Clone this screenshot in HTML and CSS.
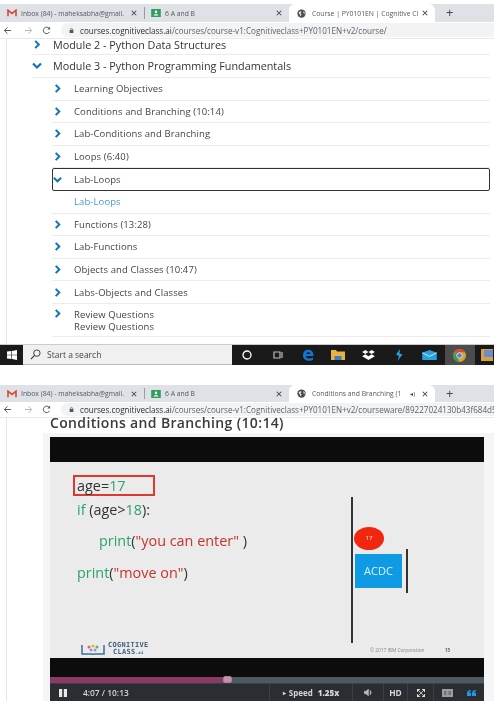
FILE: index.html
```html
<!DOCTYPE html>
<html lang="en">
<head>
<meta charset="utf-8">
<title>Course</title>
<link rel="stylesheet" href="styles.css">
</head>
<body>
<svg class="defs" width="0" height="0" aria-hidden="true">
  <symbol id="gmail" viewBox="0 0 12 10"><path d="M1 9V1.500L6 5.500 11 1.500V9" fill="none" stroke="#d9463c" stroke-width="2"/></symbol>
  <symbol id="classroom" viewBox="0 0 12 10"><rect width="12" height="10" fill="#2f9e5b"/><circle cx="6" cy="3.600" r="1.600" fill="#fff"/><path d="M3 8c0-2 6-2 6 0z" fill="#fff"/></symbol>
  <symbol id="globe" viewBox="0 0 12 12"><circle cx="6" cy="6" r="5.500" fill="#4a4d52"/><path d="M2 4.500 5 2.500 6 4 4.500 5.500 6 7 5 10 3.500 7zM8 3l2 1 .5 3L9 6z" fill="#e8e8e8"/></symbol>
  <symbol id="x" viewBox="0 0 8 8"><path d="M1 1l6 6M7 1 1 7" stroke="#44474a" stroke-width="1.400" fill="none"/></symbol>
  <symbol id="right" viewBox="0 0 8 10"><path d="M2 1l4 4-4 4" fill="none" stroke="#0f75b4" stroke-width="2.200"/></symbol>
  <symbol id="down" viewBox="0 0 10 8"><path d="M1 2l4 4 4-4" fill="none" stroke="#0f75b4" stroke-width="2.200"/></symbol>
  <symbol id="back" viewBox="0 0 10 10"><path d="M9 5H1.500M5 1.500 1.500 5 5 8.500" fill="none" stroke="currentColor" stroke-width="1.100"/></symbol>
  <symbol id="fwd" viewBox="0 0 10 10"><path d="M1 5h7.500M5 1.500 8.500 5 5 8.500" fill="none" stroke="currentColor" stroke-width="1.100"/></symbol>
  <symbol id="reload" viewBox="0 0 10 10"><path d="M8.300 6.500A3.600 3.600 0 1 1 7.800 2.500" fill="none" stroke="#55585c" stroke-width="1.100"/><path d="M9 .8V4H5.800z" fill="#55585c"/></symbol>
  <symbol id="lock" viewBox="0 0 8 10"><rect x="1" y="4" width="6" height="5" fill="#55585c"/><path d="M2.500 4V3a1.500 1.500 0 0 1 3 0v1" fill="none" stroke="#55585c"/></symbol>
</svg>

<section class="window window-top">
  <div class="tabstrip">
    <div class="tab tab-first"><svg class="fav"><use href="#gmail"/></svg><span class="tab-title">Inbox (84) - maheksabha@gmail.</span><svg class="close"><use href="#x"/></svg></div>
    <div class="tab-sep"></div>
    <div class="tab tab-second"><svg class="fav"><use href="#classroom"/></svg><span class="tab-title">6 A and B</span><svg class="close"><use href="#x"/></svg></div>
    <div class="tab tab-active"><svg class="fav globe"><use href="#globe"/></svg><span class="tab-title">Course | PY0101EN | Cognitive Cl</span><svg class="close"><use href="#x"/></svg></div>
    <div class="newtab">+</div>
  </div>
  <div class="toolbar">
    <svg class="nav"><use href="#back"/></svg><svg class="nav nav-off"><use href="#fwd"/></svg><svg class="nav"><use href="#reload"/></svg>
    <div class="omnibox"><svg class="lock"><use href="#lock"/></svg><span class="host">courses.cognitiveclass.ai</span><span class="path">/courses/course-v1:Cognitiveclass+PY0101EN+v2/course/</span></div>
  </div>
  <main class="outline">
    <div class="module module-clip"><svg class="chev"><use href="#right"/></svg><span>Module 2 - Python Data Structures</span></div>
    <div class="module module-open"><svg class="chev"><use href="#down"/></svg><span>Module 3 - Python Programming Fundamentals</span></div>
    <ul class="items">
      <li class="item"><svg class="chev-s"><use href="#right"/></svg>Learning Objectives</li>
      <li class="item"><svg class="chev-s"><use href="#right"/></svg>Conditions and Branching (10:14)</li>
      <li class="item"><svg class="chev-s"><use href="#right"/></svg>Lab-Conditions and Branching</li>
      <li class="item"><svg class="chev-s"><use href="#right"/></svg>Loops (6:40)</li>
      <li class="item item-focus"><svg class="chev-s"><use href="#down"/></svg>Lab-Loops</li>
      <li class="item item-link">Lab-Loops</li>
      <li class="item"><svg class="chev-s"><use href="#right"/></svg>Functions (13:28)</li>
      <li class="item"><svg class="chev-s"><use href="#right"/></svg>Lab-Functions</li>
      <li class="item"><svg class="chev-s"><use href="#right"/></svg>Objects and Classes (10:47)</li>
      <li class="item"><svg class="chev-s"><use href="#right"/></svg>Labs-Objects and Classes</li>
      <li class="item item-double"><svg class="chev-s"><use href="#right"/></svg><span class="stack"><span>Review Questions</span><span>Review Questions</span></span></li>
    </ul>
  </main>
  <footer class="taskbar">
    <div class="start"><svg viewBox="0 0 10 10" width="10" height="10"><path d="M0 1.500 4.400 1V4.700H0zM5 .9 10 0V4.700H5zM0 5.300H4.400V9L0 8.500zM5 5.300H10V10L5 9.100z" fill="#fff"/></svg></div>
    <div class="search"><svg viewBox="0 0 12 12" width="11" height="11"><circle cx="7.500" cy="4.500" r="3.500" fill="none" stroke="#333" stroke-width="1"/><path d="M5 7 1 11" stroke="#333" stroke-width="1.200"/></svg><span>Start a search</span></div>
    <div class="tray">
      <div class="tray-slot"><svg viewBox="0 0 10 10" width="10" height="10"><circle cx="5" cy="5" r="4" fill="none" stroke="#fff" stroke-width="1.300"/></svg></div>
      <div class="tray-slot"><svg viewBox="0 0 12 10" width="12" height="10"><path d="M2 2h6v6H2zM10 2v6" fill="none" stroke="#bbb" stroke-width="1.200"/></svg></div>
      <div class="tray-slot"><svg viewBox="0 0 12 12" width="12" height="12"><path d="M1 6.500C1 2 4 .8 6.500.8 9.500.8 11.500 3 11.500 7H4c0 3 4.500 3.300 7 1.500v2.500C7 12.800 1 11.500 1 6.500zM4.200 5h4.200C8.300 2.800 4.700 2.800 4.200 5z" fill="#0e78d8"/></svg></div>
      <div class="tray-slot"><svg viewBox="0 0 14 10" width="14" height="10"><path d="M0 0h5l1 1.500h8V10H0z" fill="#e6b43c"/><rect x="3.500" y="6" width="7" height="4" fill="#3b7fc0"/></svg></div>
      <div class="tray-slot"><svg viewBox="0 0 14 11" width="13" height="10"><path d="M3.500 0 7 2.200 3.500 4.500 0 2.200zM10.500 0 14 2.200 10.500 4.500 7 2.200zM3.500 4.700 7 7l3.500-2.300L14 7l-7 4-7-4z" fill="#fff"/></svg></div>
      <div class="tray-slot"><svg viewBox="0 0 8 12" width="8" height="12"><path d="M5 0 1 5.500 4 7 2.500 12 7.500 5.500 4.500 4.500z" fill="#2a9fe0"/></svg></div>
      <div class="tray-slot"><svg viewBox="0 0 16 11" width="15" height="10"><path d="M0 3 8 0l8 3v8H0z" fill="#2aa0dd"/><path d="M0 3l8 4 8-4" fill="none" stroke="#fff" stroke-width=".8"/></svg></div>
      <div class="tray-slot tray-chrome"><svg viewBox="0 0 12 12" width="13" height="13"><circle cx="6" cy="6" r="6" fill="#d9a52e"/><path d="M6 0a6 6 0 0 1 5.200 3H6a3 3 0 0 0-2.700 1.700L1.300 2.300A6 6 0 0 1 6 0z" fill="#d84a3a"/><path d="M0 6a6 6 0 0 1 1.300-3.700L3.300 6 6 12A6 6 0 0 1 0 6z" fill="#3c9a54"/><circle cx="6" cy="6" r="2.500" fill="#4a86d8" stroke="#eee" stroke-width=".7"/></svg></div>
      <div class="tray-slot tray-last"><svg viewBox="0 0 12 12" width="12" height="12"><rect width="12" height="12" fill="#d8a040"/><rect x="3" y="1" width="9" height="7" fill="#6a8fc8"/></svg></div>
    </div>
  </footer>
</section>

<section class="window window-bottom">
  <div class="tabstrip">
    <div class="tab tab-first"><svg class="fav"><use href="#gmail"/></svg><span class="tab-title">Inbox (84) - maheksabha@gmail.</span><svg class="close"><use href="#x"/></svg></div>
    <div class="tab-sep"></div>
    <div class="tab tab-second"><svg class="fav"><use href="#classroom"/></svg><span class="tab-title">6 A and B</span><svg class="close"><use href="#x"/></svg></div>
    <div class="tab tab-active"><svg class="fav globe"><use href="#globe"/></svg><span class="tab-title">Conditions and Branching (1</span><span class="audio">◂)</span><svg class="close"><use href="#x"/></svg></div>
    <div class="newtab">+</div>
  </div>
  <div class="toolbar toolbar-short">
    <svg class="nav"><use href="#back"/></svg><svg class="nav nav-off"><use href="#fwd"/></svg><svg class="nav"><use href="#reload"/></svg>
    <div class="omnibox"><svg class="lock"><use href="#lock"/></svg><span class="host">courses.cognitiveclass.ai</span><span class="path">/courses/course-v1:Cognitiveclass+PY0101EN+v2/courseware/89227024130b43f684d5</span></div>
  </div>
  <main class="lesson">
    <h1 class="lesson-title">Conditions and Branching (10:14)</h1>
    <div class="panel">
      <div class="video">
        <div class="letterbox letterbox-top"></div>
        <div class="slide">
          <div class="age-box"></div>
          <p class="code code-1"><span class="ink">age=</span><span class="grn">17</span></p>
          <p class="code code-2"><span class="grn">if</span> <span class="ink">(age&gt;</span><span class="grn">18</span><span class="ink">):</span></p>
          <p class="code code-3"><span class="grn">print</span><span class="ink">(</span><span class="red">"you can enter"</span><span class="ink"> )</span></p>
          <p class="code code-4"><span class="grn">print</span><span class="ink">(</span><span class="red">"move on"</span><span class="ink">)</span></p>
          <div class="rule rule-main"></div>
          <div class="bubble">17</div>
          <div class="acdc">ACDC</div>
          <div class="rule rule-side"></div>
          <div class="logo">
            <svg viewBox="0 0 24 12" width="24" height="12"><path d="M1 2v9h10l1 1 1-1h10V2" fill="none" stroke="#3f6f9f" stroke-width="1.500"/><circle cx="8" cy="4" r="1.500" fill="#d9695f"/><circle cx="12" cy="3" r="1.500" fill="#e0b040"/><circle cx="16" cy="4" r="1.500" fill="#5fb27a"/><circle cx="10" cy="7" r="1.500" fill="#6aa5d8"/><circle cx="14" cy="7" r="1.500" fill="#b58ac8"/></svg>
            <div class="logo-text"><span>COGNITIVE</span><span>CLASS<small>.ai</small></span></div>
          </div>
          <div class="copyright">© 2017 IBM Corporation</div>
          <div class="page-no">15</div>
        </div>
        <div class="letterbox letterbox-bottom"></div>
        <div class="progress"><div class="progress-fill" style="width:40.2%"></div><div class="progress-handle"></div></div>
        <div class="controls">
          <div class="ctl ctl-play"><svg viewBox="0 0 8 8" width="8" height="8"><path d="M0 0h3.200v8H0zM4.800 0H8v8H4.800z" fill="#e8e8e8"/></svg></div>
          <div class="ctl ctl-time">4:07 / 10:13</div>
          <div class="ctl ctl-speed"><span class="tri">▸</span> Speed <b>1.25x</b></div>
          <div class="ctl ctl-vol"><svg viewBox="0 0 10 8" width="9" height="7"><path d="M0 2.500h2L5 0v8L2 5.500H0zM6.500 1c2 1.500 2 4.500 0 6" fill="#bbb" stroke="#bbb" stroke-width=".5"/></svg></div>
          <div class="ctl ctl-hd">HD</div>
          <div class="ctl ctl-full"><svg viewBox="0 0 8 8" width="8" height="8"><path d="M0 0h3L0 3zM8 0v3L5 0zM0 8V5l3 3zM8 8H5l3-3zM2 2l4 4M6 2 2 6" fill="#ddd" stroke="#ddd" stroke-width=".8"/></svg></div>
          <div class="ctl ctl-cc"><svg viewBox="0 0 11 8" width="11" height="8"><rect width="11" height="8" fill="#9a9ea2"/><path d="M2 3h2.500M2 5h2.500M6.500 3H9M6.500 5H9" stroke="#444" stroke-width=".9"/></svg></div>
          <div class="ctl ctl-quote"><svg viewBox="0 0 9 6" width="9" height="6"><path d="M0 6V3.200C0 1.200 1.200.3 3.800 0v1.300C2.900 1.500 2.300 1.900 2.200 2.700H4V6zM5 6V3.200C5 1.200 6.200.3 8.800 0v1.300C7.900 1.500 7.300 1.900 7.200 2.700H9V6z" fill="#1e9be8"/></svg></div>
        </div>
      </div>
    </div>
  </main>
</section>
</body>
</html>
```

FILE: styles.css
```css
* { box-sizing: border-box; }
html, body { margin: 0; padding: 0; background: #fff; }
body {
  width: 494px;
  height: 701px;
  overflow: hidden;
  font-family: "Open Sans", sans-serif;
  filter: blur(0.45px);
}
.defs { position: absolute; }
p, h1, ul { margin: 0; padding: 0; }

.window { display: flex; flex-direction: column; overflow: hidden; }
.window-top { height: 365px; padding-top: 4px; }
.window-bottom { height: 316px; margin-top: 20px; }

/* browser chrome */
.tabstrip { display: flex; align-items: stretch; height: 18px; background: #dee1e6; flex: none; }
.window-bottom .tabstrip { height: 17px; }
.tab { display: flex; align-items: center; font-size: 6.8px; color: #55585c; white-space: nowrap; }
.tab-first { width: 144px; padding-left: 7px; }
.tab-second { width: 144px; padding-left: 6px; }
.tab-active { width: 146px; padding-left: 8px; background: #fff; border-radius: 6px 6px 0 0; }
.tab-sep { width: 1px; margin: 3px 0; background: #9a9ca0; flex: none; }
.fav { width: 10px; height: 8px; flex: none; margin-right: 4px; }
.globe { width: 9px; height: 9px; margin-right: 6px; }
.tab-title { flex: 1; overflow: hidden; }
.audio { font-size: 6px; margin-right: 7px; color: #444; }
.close { width: 6px; height: 6px; flex: none; margin-right: 7px; }
.newtab { margin-left: 11px; font-size: 13px; line-height: 17px; color: #44474a; }

.toolbar { display: flex; align-items: center; height: 17px; flex: none; padding-left: 3px; background: #fff; border-bottom: 1px solid #e8e9eb; }
.toolbar-short { height: 16px; }
.nav { width: 9px; height: 9px; flex: none; margin-right: 10px; color: #55585c; }
.nav-off { color: #b5b7ba; margin-left: 2px; margin-right: 9px; }
.omnibox { display: flex; align-items: center; flex: 1; height: 14px; padding-left: 8px; background: #f1f3f4; border-radius: 7px 0 0 7px; font-size: 8.1px; white-space: nowrap; overflow: hidden; }
.toolbar-short .omnibox { height: 13px; }
.lock { width: 5px; height: 7px; flex: none; margin-right: 6px; }
.host { color: #2d2f31; }
.path { color: #5f6368; }

/* course outline */
.outline { flex: 1; margin-left: 6px; border-left: 1px solid #e6e6e6; padding: 0 4px 0 25px; overflow: hidden; }
.module { display: flex; align-items: center; border-bottom: 1px solid #ececec; font-size: 10.8px; line-height: 11px; color: #333; }
.module-clip { height: 16px; padding-bottom: 4px; }
.module-open { height: 23px; padding-bottom: 1px; }
.chev { width: 10px; height: 9px; flex: none; margin-right: 11px; }
.items { list-style: none; margin-left: 20px; }
.item { display: flex; align-items: center; height: 22.6px; border-bottom: 1px solid #ececec; font-size: 9.5px; letter-spacing: .1px; color: #444; }
.chev-s { width: 9px; height: 9px; flex: none; margin: 0 12px 0 1px; }
.item-focus { border: 1px solid #333; border-radius: 2px; background: #fff; }
.item-focus .chev-s { margin-left: 0; }
.item-link { padding-left: 22px; color: #4a9ad0; }
.item-double { height: 33.2px; align-items: flex-start; padding-top: 5px; }
.stack { display: flex; flex-direction: column; line-height: 12.5px; }

/* taskbar */
.taskbar { display: flex; align-items: stretch; height: 21px; flex: none; background: #1a1a1a; border-top: 1px solid #ccc; }
.start { display: flex; align-items: center; justify-content: center; width: 23px; flex: none; }
.search { display: flex; align-items: center; gap: 6px; width: 209px; flex: none; padding-left: 7px; background: #f0f0f0; font-size: 8.5px; color: #444; border-bottom: 1px solid #bbb; }
.tray { display: flex; flex: 1; align-items: stretch; }
.tray-slot { display: flex; align-items: center; justify-content: center; width: 30.4px; flex: none; }
.tray-chrome { background: #4c4c4c; }
.tray-last { width: 20px; justify-content: flex-start; padding-left: 6px; }

/* lesson */
.lesson { flex: 1; margin-left: 6px; border-left: 1px solid #e6e6e6; display: flex; flex-direction: column; min-height: 0; }
.lesson-title { height: 10px; margin: 0 0 5px 43px; font-size: 14px; font-weight: 600; line-height: 10px; letter-spacing: .35px; color: #3a3a3a; flex: none; }
.panel { flex: 1; margin-left: 36px; padding: 4px 10px 0 7px; background: #f5f5f5; min-height: 0; overflow: hidden; }
.video { display: flex; flex-direction: column; }
.letterbox { background: #0c0c0c; }
.letterbox-top { height: 25px; }
.letterbox-bottom { height: 19px; }

/* slide canvas */
.slide { position: relative; height: 196px; background: #ebebeb; }
.age-box { position: absolute; left: 23px; top: 13px; width: 82px; height: 21px; border: 2px solid #e0392b; }
.code { position: absolute; font-size: 14.4px; line-height: 18px; white-space: nowrap; }
.code-1 { left: 27px; top: 15px; }
.code-2 { left: 27px; top: 39px; }
.code-3 { left: 49px; top: 70px; }
.code-4 { left: 27px; top: 102px; }
.ink { color: #333; }
.grn { color: #2da36c; }
.red { color: #c8332b; }
.rule { position: absolute; background: #333; }
.rule-main { left: 301px; top: 35px; width: 2px; height: 146px; }
.rule-side { left: 356px; top: 87px; width: 2px; height: 44px; }
.bubble { position: absolute; left: 304px; top: 65px; width: 30px; height: 23px; border-radius: 50%; background: #f2260f; color: #f3d0c8; font-size: 6px; font-weight: 600; text-align: center; line-height: 23px; }
.acdc { position: absolute; left: 305px; top: 92px; width: 47px; height: 34px; background: #0f9be3; color: #dff1fb; font-size: 11px; text-align: center; line-height: 34px; }
.logo { position: absolute; left: 31px; top: 180px; display: flex; gap: 3px; align-items: center; }
.logo-text { display: flex; flex-direction: column; align-items: center; font-family: "DejaVu Sans Mono", monospace; font-size: 7px; line-height: 6.5px; font-weight: 700; color: #3f5f7f; letter-spacing: .3px; }
.logo-text small { font-size: 4px; }
.copyright { position: absolute; left: 320px; top: 184px; font-size: 4.8px; line-height: 8px; color: #888; white-space: nowrap; }
.page-no { position: absolute; left: 395px; top: 184px; font-size: 4.5px; line-height: 8px; font-weight: 700; color: #666; }

/* player */
.progress { position: relative; height: 7px; background: #4d5b5f; border-bottom: 1px solid #3a4045; }
.progress-fill { height: 6px; background: #8c3a64; }
.progress-handle { position: absolute; left: 173px; top: -1px; width: 9px; height: 7px; background: #d986b3; border: 1px solid #8a8f92; border-radius: 2px; }
.controls { display: flex; align-items: stretch; height: 17px; background: #2a2e33; color: #d4d6d8; font-size: 8.4px; font-weight: 700; }
.ctl { display: flex; align-items: center; justify-content: center; flex: none; border-right: 1px solid #3b4046; }
.ctl-play { width: 25px; border-right: 0; }
.ctl-time { width: 195px; justify-content: flex-start; padding-left: 8px; font-weight: 600; }
.ctl-speed { width: 83px; gap: 3px; font-size: 8px; }
.tri { font-size: 6px; }
.ctl-speed b { margin-left: 2px; }
.ctl-vol { width: 31px; }
.ctl-hd { width: 24px; }
.ctl-full { width: 26px; }
.ctl-cc { width: 26px; border-right: 0; }
.ctl-quote { width: 23px; border-right: 0; }
```
